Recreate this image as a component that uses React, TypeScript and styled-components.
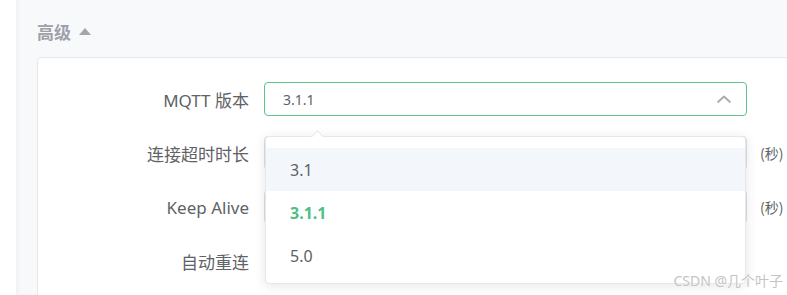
import React, { ReactElement } from 'react'
import styled, { createGlobalStyle } from 'styled-components'

const GlobalStyle = createGlobalStyle`
  html, body {
    margin: 0;
    padding: 0;
    background: #ffffff;
    overflow: hidden;
  }
  body {
    font-family: 'Noto Sans', 'Noto Sans CJK SC', sans-serif;
  }
`

const Page = styled.div`
  display: flex;
  width: 787px;
  height: 295px;
  overflow: hidden;
  position: relative;
`

const SideStrip = styled.div`
  width: 16px;
  flex-shrink: 0;
  background: #ffffff;
`

const Main = styled.div`
  flex: 1;
  background: #f8f9fb;
  box-shadow: inset 4px 0 4px -2px rgba(0, 0, 0, 0.04);
  padding: 19px 0 0 21px;
  min-width: 0;
`

const Heading = styled.div`
  display: flex;
  align-items: center;
  gap: 8px;
  height: 24px;
  color: #9ea1a8;
  font-size: 17px;
  font-weight: 700;
  font-family: 'Noto Sans CJK SC', sans-serif;
`

const Triangle = styled.span`
  width: 0;
  height: 0;
  border-left: 6.5px solid transparent;
  border-right: 6.5px solid transparent;
  border-bottom: 7px solid #a3a6ac;
  margin-top: 1px;
`

const Card = styled.div`
  margin-top: 14px;
  width: 800px;
  height: 260px;
  background: #ffffff;
  border: 1px solid #e6e8ec;
  border-radius: 4px;
  padding-top: 24px;
  box-sizing: border-box;
  position: relative;
`

const Row = styled.div`
  display: flex;
  align-items: center;
  height: 34px;
  margin-bottom: 20px;
`

const Label = styled.div`
  width: 211px;
  text-align: right;
  padding-right: 15px;
  font-size: 17px;
  color: #606266;
  flex-shrink: 0;
  font-family: 'Noto Sans', 'Noto Sans CJK SC', sans-serif;
`

const Select = styled.div<{ active?: boolean }>`
  width: 483px;
  height: 34px;
  box-sizing: border-box;
  border: 1px solid ${({ active }) => (active ? '#5cc48d' : '#dcdfe6')};
  border-radius: 4px;
  display: flex;
  align-items: center;
  justify-content: space-between;
  padding: 0 14px 0 18px;
  font-size: 14px;
  color: #606266;
  background: #ffffff;
`

const InputBox = styled.div`
  width: 483px;
  height: 34px;
  box-sizing: border-box;
  border: 1px solid #dcdfe6;
  border-radius: 4px;
  display: flex;
  justify-content: flex-end;
`

const Append = styled.div`
  width: 36px;
  border-left: 1px solid #dcdfe6;
`

const Unit = styled.span`
  margin-left: 13px;
  font-size: 14px;
  color: #606266;
  font-family: 'Noto Sans CJK SC', sans-serif;
`

const Dropdown = styled.div`
  position: absolute;
  left: 227px;
  top: 78px;
  width: 481px;
  box-sizing: border-box;
  padding: 11px 0 6px;
  background: #ffffff;
  border: 1px solid #e4e7ed;
  border-radius: 4px;
  box-shadow: 0 2px 12px rgba(0, 0, 0, 0.1);
  z-index: 5;
`

const Arrow = styled.div`
  position: absolute;
  top: -5px;
  left: 47px;
  width: 8px;
  height: 8px;
  background: #ffffff;
  border-left: 1px solid #e4e7ed;
  border-top: 1px solid #e4e7ed;
  transform: rotate(45deg);
`

const Option = styled.div<{ selected?: boolean; hover?: boolean }>`
  height: 43px;
  display: flex;
  align-items: center;
  padding-left: 24px;
  font-size: 16px;
  color: ${({ selected }) => (selected ? '#4fbf85' : '#606266')};
  font-weight: ${({ selected }) => (selected ? 700 : 400)};
  background: ${({ hover }) => (hover ? '#f3f6fa' : 'transparent')};
`

const Watermark = styled.div`
  position: absolute;
  right: 4px;
  bottom: 5px;
  font-size: 14px;
  color: #c4c4c4;
  text-shadow: 0 0 2px #ffffff;
  font-family: 'Noto Sans', 'Noto Sans CJK SC', sans-serif;
  z-index: 6;
`

const ChevronUp = (): ReactElement => (
  <svg width="16" height="10" viewBox="0 0 16 10">
    <polyline
      points="2,8 8,2.5 14,8"
      fill="none"
      stroke="#a8abb2"
      strokeWidth="1.8"
      strokeLinecap="round"
      strokeLinejoin="round"
    />
  </svg>
)

const App = (): ReactElement => {
  const versions = ['3.1', '3.1.1', '5.0']

  return (
    <Page>
      <GlobalStyle />
      <SideStrip />
      <Main>
        <Heading>
          高级
          <Triangle />
        </Heading>
        <Card>
          <Row>
            <Label>MQTT 版本</Label>
            <Select active>
              <span>3.1.1</span>
              <ChevronUp />
            </Select>
          </Row>
          <Row>
            <Label>连接超时时长</Label>
            <InputBox>
              <Append />
            </InputBox>
            <Unit>(秒)</Unit>
          </Row>
          <Row>
            <Label>Keep Alive</Label>
            <InputBox>
              <Append />
            </InputBox>
            <Unit>(秒)</Unit>
          </Row>
          <Row>
            <Label>自动重连</Label>
          </Row>
          <Dropdown>
            <Arrow />
            {versions.map((v) => (
              <Option key={v} selected={v === '3.1.1'} hover={v === '3.1'}>
                {v}
              </Option>
            ))}
          </Dropdown>
        </Card>
      </Main>
      <Watermark>CSDN @几个叶子</Watermark>
    </Page>
  )
}

export default App
